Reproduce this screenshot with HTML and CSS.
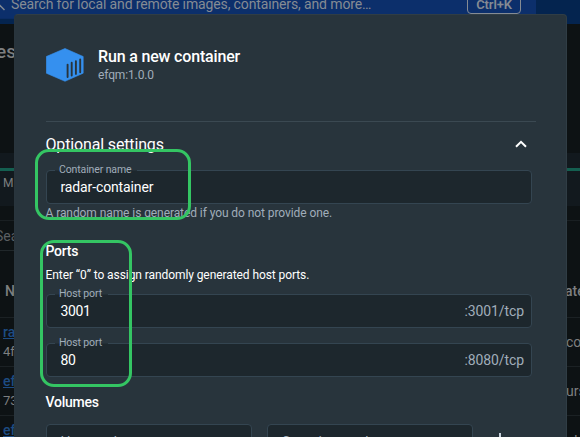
FILE: index.html
```html
<!DOCTYPE html>
<html lang="en">
<head>
<meta charset="utf-8">
<title>Run a new container</title>
<link rel="stylesheet" href="styles.css">
</head>
<body>
<div class="app">
  <header class="topbar">
    <div class="search">
      <svg class="search-icon" width="10" height="14" viewBox="0 0 10 14"><path d="M-1 5 L4 10" stroke="#848b93" stroke-width="1.5" fill="none"/></svg>
      <span class="search-text">Search for local and remote images, containers, and more…</span>
      <kbd class="shortcut">Ctrl+K</kbd>
    </div>
  </header>
  <div class="page-title">es</div>
  <div class="stats"><div class="stats-line"></div><span>MI</span></div>
  <div class="spacer"></div>
  <div class="filter">Sea</div>
  <div class="row head"><span class="name">N</span><span class="end">ate</span></div>
  <div class="row"><div class="item"><a>rad</a><span>4fb</span></div><span class="end">co</span></div>
  <div class="row"><div class="item"><a>efq</a><span>73c</span></div><span class="end">urs</span></div>
  <div class="row"><div class="item"><a>efq</a></div><span class="end">nt</span></div>
</div>

<section class="modal">
  <div class="modal-head">
    <svg class="cube" width="38" height="34" viewBox="0 0 38 34">
      <path d="M19 .5 L37.2 8.5 V25.2 L19 33.3 L.3 25.2 V8.5 Z" fill="#3590ef" stroke="#3590ef" stroke-linejoin="round" stroke-width=".6"/>
      <path d="M21.6 16.6V29.1M25.7 14.7V27.5M29.9 13.1V25.9M34.2 11.4V24.2" stroke="#28343c" stroke-width="1.9" stroke-linecap="round"/>
    </svg>
    <div>
      <h1>Run a new container</h1>
      <p class="image-name">efqm:1.0.0</p>
    </div>
  </div>
  <div class="divider"></div>
  <div class="settings-head">
    <h2>Optional settings</h2>
    <svg width="12" height="8" viewBox="0 0 12 8"><path d="M1 6.8 L6 1.8 L11 6.8" fill="none" stroke="#fff" stroke-width="2"/></svg>
  </div>
  <div class="field">
    <label class="wide">Container name</label><span class="value">radar-container</span>
  </div>
  <p class="helper">A random name is generated if you do not provide one.</p>
  <h3>Ports</h3>
  <p class="hint">Enter “0” to assign randomly generated host ports.</p>
  <div class="field"><label>Host port</label><span class="value number">3001</span><span class="suffix">:3001/tcp</span></div>
  <div class="field second"><label>Host port</label><span class="value number">80</span><span class="suffix">:8080/tcp</span></div>
  <h3 class="volumes">Volumes</h3>
  <div class="paths">
    <div class="field path">Host path</div>
    <div class="field path">Container path</div>
    <svg class="plus" width="14" height="14" viewBox="0 0 14 14"><path d="M7 0V14M0 7H14" stroke="#c9d3dc" stroke-width="2"/></svg>
  </div>
</section>
<div class="marker marker-name"></div>
<div class="marker marker-ports"></div>
</body>
</html>
```

FILE: styles.css
```css
* { box-sizing: border-box; }
body { margin: 0; width: 580px; height: 437px; overflow: hidden; position: relative; background: #0d1214; font-family: Roboto, "Liberation Sans", sans-serif; }
h1, h2, h3, p { margin: 0; }
.app { height: 437px; overflow: hidden; color: #7d7f80; }
.topbar { height: 24px; background: #04244f; }
.search { width: 536px; height: 19px; background: #0c2f6b; display: flex; align-items: flex-start; box-shadow: inset 0 -1px #0a2c64; }
.search-icon { flex: none; width: 11px; }
.search-text { flex: none; width: 456px; font-size: 14px; line-height: 18px; margin-top: -5px; letter-spacing: -.13px; color: #858b93; white-space: nowrap; }
.shortcut { width: 54px; height: 20px; margin-top: -6px; border: 1px solid #858b93; border-radius: 4px; font: 600 13px/19px Roboto, sans-serif; letter-spacing: -.1px; text-align: center; color: #858b93; }
.page-title { height: 129px; padding-top: 15px; margin-left: -4px; font-size: 19px; font-weight: 500; line-height: 26px; }
.stats { height: 53px; background: #12191e; padding-top: 15px; font-size: 12px; line-height: 24px; }
.stats-line { height: 3px; background: #145f50; }
.stats span { margin-left: 3px; letter-spacing: .3px; }
.spacer { height: 15px; border-bottom: 1px solid #191f22; }
.filter { height: 30px; width: 20px; border-bottom: 1px solid #20272a; font-size: 14px; line-height: 30px; margin-left: -5px; color: #5b5f62; }
.row { display: flex; justify-content: space-between; height: 49px; border-bottom: 1px solid #1b2124; font-size: 14px; }
.row.head { height: 67px; padding-top: 31px; font-weight: 500; line-height: 18px; }
.name { margin-left: 5px; }
.end { width: 14px; line-height: 49px; white-space: nowrap; }
.head .end { width: 15px; line-height: 18px; }
.item { display: flex; flex-direction: column; margin-left: 3px; padding-top: 4px; font-size: 13px; line-height: 20px; }
.item a { color: #1d4c83; font-weight: 500; font-size: 14px; text-decoration: underline; }
.modal { position: absolute; left: 14px; top: 14px; width: 553px; height: 440px; padding: 32px 30px 0 31px; background: #28343c; border: 1px solid #303d45; border-left-color: #29353d; border-radius: 4px; color: #fff; }
.modal-head { display: flex; height: 74px; }
.cube { margin: 1px 14px 0 0; flex: none; }
h1 { font-size: 16px; line-height: 20px; font-weight: 500; letter-spacing: -.17px; }
.image-name { font-size: 12px; line-height: 16px; color: #a0adba; letter-spacing: -.13px; }
.divider { height: 1px; background: #3b4952; }
.settings-head { height: 48px; display: flex; justify-content: space-between; padding-right: 9px; }
.settings-head svg { margin-top: 18px; }
h2 { font-size: 16px; line-height: 45px; font-weight: 400; margin-left: -.5px; letter-spacing: -.15px; }
.field { position: relative; width: 486px; height: 34px; background: #1d272d; border: 1px solid #344551; border-radius: 4px; display: flex; justify-content: space-between; padding: 0 7px 0 13.5px; line-height: 33px; font-size: 14px; }
.field label { position: absolute; left: 8px; top: -8px; width: 53px; padding-left: 4px; font-size: 10.5px; line-height: 14px; color: #a0adba; letter-spacing: -.12px; white-space: nowrap; background: linear-gradient(#232e35, #232e35) 0 7px / 100% 1px no-repeat; }
.field label.wide { width: 82px; }
.value { letter-spacing: -.13px; }
.number { letter-spacing: -.4px; }
.suffix { color: #a0adba; letter-spacing: -.1px; }
.helper { height: 38px; font-size: 12px; line-height: 18px; color: #a0adba; letter-spacing: -.08px; margin-left: -.5px; }
h3 { font-size: 14px; line-height: 18px; font-weight: 500; height: 24px; margin-left: -.5px; letter-spacing: -.25px; }
.hint { height: 28px; font-size: 12px; line-height: 18px; letter-spacing: -.08px; margin-left: -.5px; }
.second { margin-top: 15px; }
.volumes { height: 47px; padding-top: 16px; }
.paths { display: flex; }
.path { width: 206px; margin-right: 15px; color: #a0adba; line-height: 34px; }
.plus { margin: 9px 0 0 5px; }
.marker { position: absolute; border: 3px solid #34c563; }
.marker-name { left: 35px; top: 149px; width: 156px; height: 71px; border-radius: 14px; }
.marker-ports { left: 40px; top: 240px; width: 92px; height: 147px; border-radius: 14px; }
```
